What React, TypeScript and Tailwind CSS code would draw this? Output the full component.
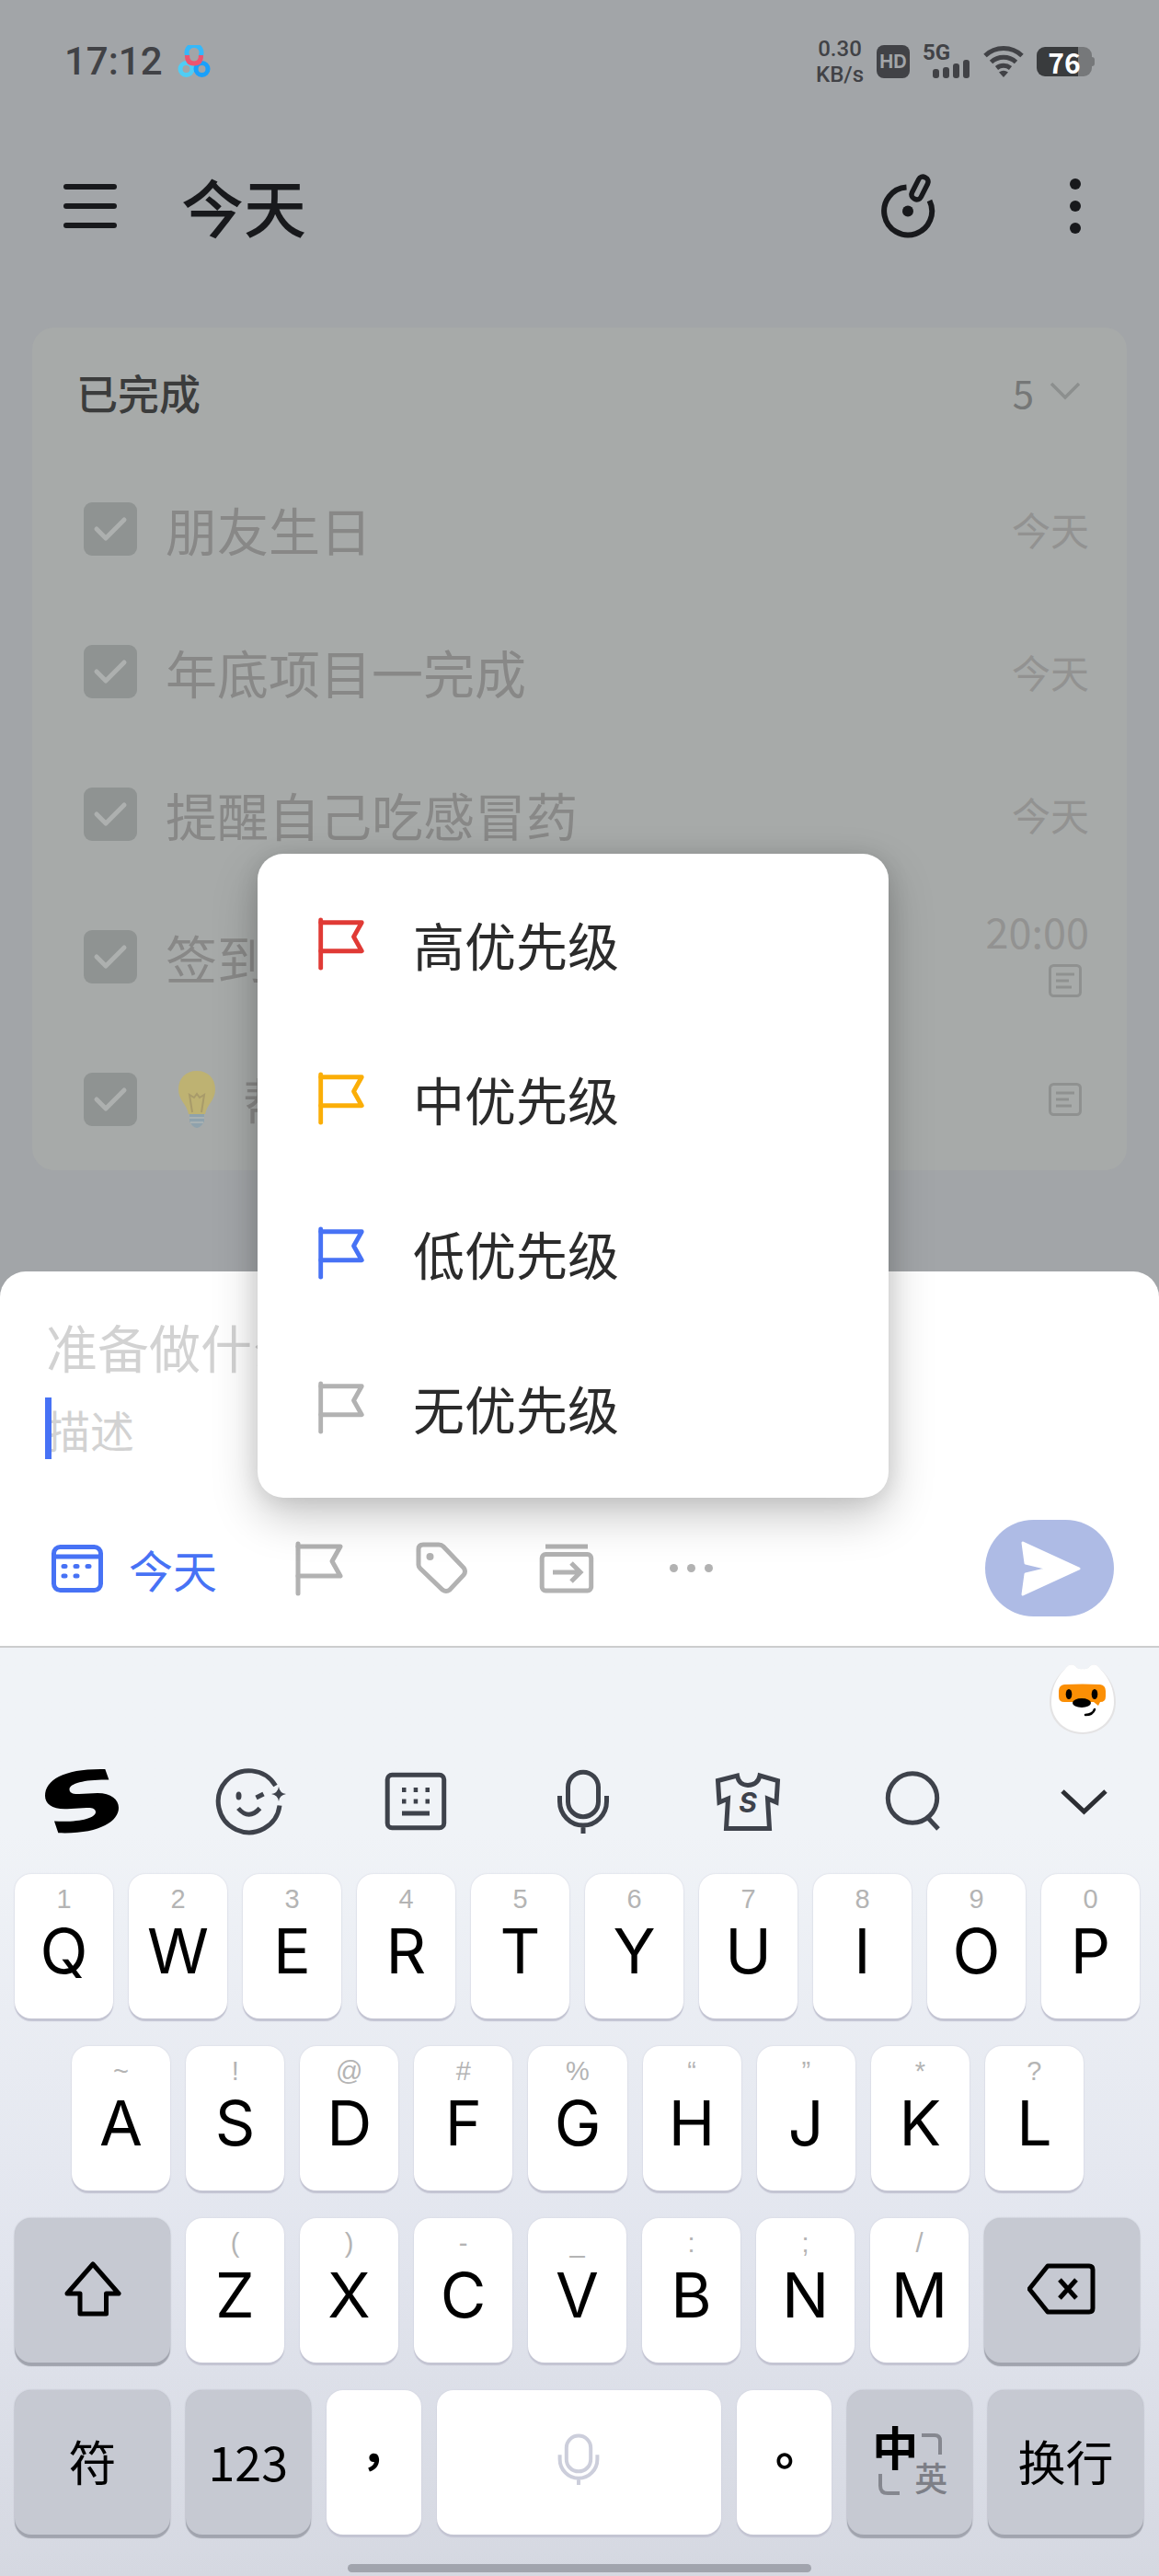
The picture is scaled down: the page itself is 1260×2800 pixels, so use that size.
import type { ReactNode } from "react";

const FlagIcon = ({ className }: { className: string }) => (
    <svg viewBox="0 0 64 64" className={className} fill="none" stroke="currentColor" strokeWidth="5" strokeLinecap="round" strokeLinejoin="round">
        <path d="M10 5V59" />
        <path d="M10 8H56L47 24L56 40H10" />
    </svg>
);

const MicIcon = ({ className, strokeWidth }: { className: string, strokeWidth: number }) => (
    <svg viewBox="0 0 80 80" className={className} fill="none" stroke="currentColor" strokeWidth={strokeWidth}>
        <rect x="23.5" y="8.2" width="33" height="48.5" rx="16.5" />
        <path d="M14.5 34V40A25.5 26 0 0 0 65.5 40V34M40 66V75" />
    </svg>
);

const NoteIcon = () => (
    <svg viewBox="0 0 52 36" className="w-[52px] h-9 text-[#8f9190]" fill="none" stroke="currentColor" strokeWidth="3">
        <rect x="9.5" y="1.5" width="33" height="33" rx="4" />
        <path d="M16 11H36M16 18H30M16 25H33" />
    </svg>
);

const StatusBar = () => (
    <div className="flex h-[134px] items-center justify-between pl-[70px] pr-[70px] text-[#414246]">
        <div className="flex items-center gap-4">
            <span className="font-['Roboto',sans-serif] text-[42px] leading-none font-medium">17:12</span>
            <svg viewBox="0 0 36 36" className="w-9 h-9" fill="none" strokeWidth="5">
                <path d="M11 12A8 8 0 1 1 25 12" stroke="#35b8fa" />
                <circle cx="9.500" cy="26" r="6.500" stroke="#4fcdf5" />
                <circle cx="26.500" cy="26" r="6.500" stroke="#1aa0fb" />
                <path d="M10.500 11Q10.500 20 18 20Q25.500 20 25.500 11" stroke="#ee5470" />
            </svg>
        </div>
        <div className="flex items-center gap-[14px]">
            <div className="flex flex-col items-center font-['Roboto',sans-serif] text-[24px] leading-7 font-medium">
                <span>0.30</span>
                <span>KB/s</span>
            </div>
            <span className="flex h-9 w-9 items-center justify-center rounded-lg bg-[#414246] font-['Inter',sans-serif] text-[20px] font-bold text-[#a2a5a8]">HD</span>
            <div className="flex flex-col">
                <span className="font-['Roboto',sans-serif] text-[24px] leading-[16px] font-bold">5G</span>
                <svg viewBox="0 0 52 20" className="w-[52px] h-5" fill="currentColor">
                    <rect x="11" y="10" width="7" height="10" rx="3" />
                    <rect x="22" y="8" width="7" height="12" rx="3" />
                    <rect x="33" y="4" width="7" height="16" rx="3" />
                    <rect x="44" y="0" width="7" height="20" rx="3" />
                </svg>
            </div>
            <svg viewBox="0 0 44 36" className="w-11 h-9" fill="none" stroke="currentColor" strokeWidth="5">
                <path d="M2 11.500A29 29 0 0 1 42 11.500" />
                <path d="M8.500 18.500A20 20 0 0 1 35.500 18.500" />
                <path d="M14.500 25A12 12 0 0 1 29.500 25" />
                <path d="M17 29.500Q22 26 27 29.500L22 35Z" fill="currentColor" stroke="none" />
            </svg>
            <div className="flex items-center">
                <span className="flex h-8 w-[60px] items-center justify-center rounded-[9px] bg-linear-to-r from-[#393b3d] from-75% to-[#76787a] to-75% text-[30px] leading-none font-bold text-white">76</span>
                <span className="h-[10px] w-[3px] rounded-r bg-[#76787a]" />
            </div>
        </div>
    </div>
);

const Header = () => (
    <header className="flex h-[180px] items-center justify-between pl-[69px] pr-[67px] text-[#18191c]">
        <div className="flex items-center gap-[70px]">
            <button aria-label="菜单" className="flex w-[58px] flex-col gap-[15px]">
                <span className="h-[6px] w-full rounded-full bg-current" />
                <span className="h-[6px] w-full rounded-full bg-current" />
                <span className="h-[6px] w-full rounded-full bg-current" />
            </button>
            <h1 className="text-[68px] leading-none font-medium">今天</h1>
        </div>
        <div className="flex items-center gap-[126px]">
            <button aria-label="专注">
                <svg viewBox="0 0 64 76" className="w-16 h-[76px]" fill="none" stroke="currentColor" strokeWidth="6">
                    <path d="M30.500 17.500A26 26 0 1 0 55.500 32" />
                    <circle cx="32" cy="43.500" r="6" fill="currentColor" stroke="none" />
                    <rect x="-5.500" y="-13" width="11" height="26" rx="5" strokeWidth="5.500" transform="translate(45 18.500) rotate(27)" />
                </svg>
            </button>
            <button aria-label="更多" className="flex w-12 flex-col items-center gap-[12px]">
                <span className="h-3 w-3 rounded-full bg-current" />
                <span className="h-3 w-3 rounded-full bg-current" />
                <span className="h-3 w-3 rounded-full bg-current" />
            </button>
        </div>
    </header>
);

const TaskRow = ({ id, title, bulb, children }: { id: string, title: string, bulb?: boolean, children: ReactNode }) => (
    <li className="flex h-[155px] items-center justify-between pl-14 pr-[41px]">
        <div className="flex items-center gap-[31px]">
            <span className="relative flex">
                <input id={id} type="checkbox" defaultChecked className="h-[58px] w-[58px] appearance-none rounded-[9px] bg-[#8f9392]" />
                <svg viewBox="0 0 58 58" className="pointer-events-none absolute inset-0" fill="none" stroke="#adb0af" strokeWidth="5" strokeLinecap="round" strokeLinejoin="round">
                    <path d="M14 29L24 39L44 19" />
                </svg>
            </span>
            <label htmlFor={id} className="flex items-center gap-7 text-[56px] leading-none whitespace-nowrap text-[#888887]">
                {bulb && (
                    <svg viewBox="0 0 56 64" className="w-14 h-16 opacity-70" fill="none">
                        <path d="M34 1C22 1 14 9 14 21C14 33 23 37 25 48H43C45 37 54 33 54 21C54 9 46 1 34 1Z" fill="#c9b65c" />
                        <path d="M29 46L26 27L31 30L34 26L37 30L42 27L39 46" stroke="#a99550" strokeWidth="2" />
                        <path d="M26 48H42V56Q38 63 34 63Q30 63 26 56Z" fill="#86a0ae" />
                        <path d="M26 52H42M27 57H41" stroke="#a8b5b8" strokeWidth="2" />
                    </svg>
                )}
                {title}
            </label>
        </div>
        <div className="flex flex-col items-end gap-5 text-[#929291]">{children}</div>
    </li>
);

const CompletedCard = () => (
    <section className="mx-[35px] mt-[42px] mb-[110px] rounded-[24px] bg-[#a7aaa9]">
        <div className="mb-px flex h-[140px] items-center justify-between pl-12 pr-[41px]">
            <h2 className="text-[45px] leading-none font-medium text-[#3b3c3c]">已完成</h2>
            <button className="flex items-center gap-2 text-[42px] leading-none text-[#757777]">
                5
                <svg viewBox="0 0 52 36" className="w-[52px] h-9" fill="none" stroke="#8c8f8e" strokeWidth="3.500">
                    <path d="M11 9L26 24L41 9" />
                </svg>
            </button>
        </div>
        <ul>
            <TaskRow id="task-1" title="朋友生日">
                <span className="text-[42px] leading-none">今天</span>
            </TaskRow>
            <TaskRow id="task-2" title="年底项目一完成">
                <span className="text-[42px] leading-none">今天</span>
            </TaskRow>
            <TaskRow id="task-3" title="提醒自己吃感冒药">
                <span className="text-[42px] leading-none">今天</span>
            </TaskRow>
            <TaskRow id="task-4" title="签到">
                <span className="text-[45px] leading-8">20:00</span>
                <NoteIcon />
            </TaskRow>
            <TaskRow id="task-5" title="帮" bulb>
                <NoteIcon />
            </TaskRow>
        </ul>
    </section>
);

const PriorityItem = ({ label, color }: { label: string, color: string }) => (
    <li>
        <button className="flex h-[168px] w-full items-center gap-12 pl-[59px] text-[56px] leading-none text-[#2b2b2b]">
            <span className={color}>
                <FlagIcon className="w-[62px] h-[62px]" />
            </span>
            {label}
        </button>
    </li>
);

const PriorityMenu = () => (
    <ul className="absolute bottom-[161px] left-[280px] w-[686px] rounded-[28px] bg-white py-[14px] shadow-[0_20px_50px_rgba(0,0,0,0.22),0_2px_24px_rgba(0,0,0,0.1)]">
        <PriorityItem label="高优先级" color="text-[#e03a35]" />
        <PriorityItem label="中优先级" color="text-[#fbae07]" />
        <PriorityItem label="低优先级" color="text-[#4772f5]" />
        <PriorityItem label="无优先级" color="text-[#b2b2b2]" />
    </ul>
);

const QuickAdd = () => (
    <section className="relative z-10 rounded-t-[28px] border-b-2 border-[#cccdce] bg-white pt-[41px] pb-8">
        <div className="flex px-[50px]">
            <input aria-label="任务标题" placeholder="准备做什么?" className="h-20 w-full text-[56px] outline-none placeholder:text-[#d2d2d2]" />
        </div>
        <div className="relative mt-4 flex px-[50px]">
            <input aria-label="描述" placeholder="描述" className="h-[68px] w-full text-[48px] outline-none placeholder:text-[#d2d2d2]" />
            <span className="absolute top-0 left-[49px] h-[67px] w-[7px] bg-[#4772f5]" />
        </div>
        <div className="mt-[65px] flex items-center justify-between pl-[52px] pr-[49px]">
            <div className="flex items-center gap-[78px]">
                <button className="flex items-center gap-6 text-[48px] leading-none text-[#4772f5]">
                    <svg viewBox="0 0 64 64" className="w-16 h-16" fill="none" stroke="currentColor" strokeWidth="5">
                        <rect x="6.500" y="8.500" width="51" height="47" rx="7" />
                        <path d="M6 19H58" />
                        <path d="M17 29.500H19M30 29.500H32M43 29.500H45M17 40H19M30 40H32" strokeLinecap="round" />
                    </svg>
                    今天
                </button>
                <div className="flex items-center gap-[71px] text-[#b2b2b2]">
                    <button aria-label="优先级">
                        <FlagIcon className="w-16 h-16" />
                    </button>
                    <button aria-label="标签">
                        <svg viewBox="0 0 64 64" className="w-16 h-16" fill="none" stroke="currentColor" strokeWidth="5">
                            <path d="M11 6H28Q31 6 33 8L55 31Q58 35 55 39L40 55Q36 58 32 55L8 32Q6 30 6 28V11Q6 6 11 6Z" />
                            <circle cx="18.500" cy="19" r="4" fill="currentColor" stroke="none" />
                        </svg>
                    </button>
                    <button aria-label="移动到">
                        <svg viewBox="0 0 64 64" className="w-16 h-16" fill="none" stroke="currentColor" strokeWidth="5">
                            <path d="M9 8H55" />
                            <rect x="5.200" y="16.500" width="53.500" height="39.500" rx="4" />
                            <path d="M17 36H46M37 26L47 36L37 46" />
                        </svg>
                    </button>
                    <button aria-label="更多选项" className="flex w-16 justify-center gap-[10px]">
                        <span className="h-[9px] w-[9px] rounded-full bg-current" />
                        <span className="h-[9px] w-[9px] rounded-full bg-current" />
                        <span className="h-[9px] w-[9px] rounded-full bg-current" />
                    </button>
                </div>
            </div>
            <button aria-label="发送" className="flex h-[105px] w-[140px] items-center justify-center rounded-full bg-[#aebbe5] pl-1">
                <svg viewBox="0 0 66 60" className="w-[66px] h-[60px]" fill="#fff" stroke="#fff" strokeWidth="3" strokeLinejoin="round">
                    <path d="M2 2L63 30L2 58L5 36L30 30L5 24Z" />
                </svg>
            </button>
        </div>
        <PriorityMenu />
    </section>
);

const KeyboardTools = () => (
    <div className="flex h-[146px] items-center justify-between pl-[49px] pr-[42px] text-[#3e424b]">
        <button aria-label="搜狗">
            <svg viewBox="0 0 80 80" className="w-20 h-20" fill="#000">
                <path d="M65.300 5L69.400 16.500C45 16 26.500 20 26.500 27C26.500 31 31 32.500 37 32L57 31C72 31 80 38 80 47C80 62 58 76 14.300 74.300L10 61.500C35 63 55 59 55 51.500C55 47.500 50 46.500 45 47L24 48.300C8 49 0 43 0 34C0 16 22 4 65.300 5Z" />
            </svg>
        </button>
        <button aria-label="表情">
            <svg viewBox="0 0 80 80" className="w-20 h-20" fill="none" stroke="currentColor" strokeWidth="5">
                <path d="M68.500 23A33.500 33.500 0 1 0 73 44.500" />
                <ellipse cx="28.500" cy="34" rx="3" ry="4.500" fill="currentColor" stroke="none" />
                <path d="M47.500 36L55.500 32M28 47.500Q39.500 61 51.500 47.500" />
                <path d="M72 24Q73 31 80 32Q73 33 72 40Q71 33 64 32Q71 31 72 24Z" fill="currentColor" stroke="none" />
            </svg>
        </button>
        <button aria-label="键盘">
            <svg viewBox="0 0 80 80" className="w-20 h-20" fill="none" stroke="currentColor" strokeWidth="5">
                <rect x="9.200" y="11.200" width="61.500" height="57.500" rx="5" />
                <path d="M25 27.500H29.500M37.700 27.500H42.200M50.500 27.500H55M25 40H29.500M37.700 40H42.200M50.500 40H55M25 53H55" />
            </svg>
        </button>
        <button aria-label="语音">
            <MicIcon className="w-20 h-20" strokeWidth={5} />
        </button>
        <button aria-label="皮肤">
            <svg viewBox="2 0 80 80" className="w-20 h-20" fill="none" stroke="currentColor" strokeWidth="5">
                <path d="M28.500 12Q30 22 40 22.500Q51 22 53 12L72.500 17.500L71 41L61.500 37L63.500 69.500H16.500L18.500 37L9 41L7.500 17.500Z" />
                <text x="40" y="52" textAnchor="middle" fill="currentColor" stroke="none" className="font-['Inter',sans-serif] text-[30px] font-bold italic">S</text>
            </svg>
        </button>
        <button aria-label="搜索">
            <svg viewBox="5 0 80 80" className="w-20 h-20" fill="none" stroke="currentColor" strokeWidth="5">
                <circle cx="40" cy="36.500" r="26.700" />
                <path d="M56 57L68 70" />
            </svg>
        </button>
        <button aria-label="收起">
            <svg viewBox="0 0 80 80" className="w-20 h-20" fill="none" stroke="#2c2e33" strokeWidth="5">
                <path d="M17 29L40.500 51L64 29" />
            </svg>
        </button>
    </div>
);

const LetterKey = ({ letter, hint }: { letter: string, hint: string }) => (
    <button className="flex h-[157px] flex-col items-center rounded-[18px] bg-white pt-[11px] text-black shadow-[0_3px_1px_#c3c4d2,0_0_2px_#cfd0dc]">
        <span className="font-['Liberation_Sans',sans-serif] text-[29px] leading-8 text-[#b4b4b4]">{hint}</span>
        <span className="font-['Inter',sans-serif] text-[68px] leading-[80px]">{letter}</span>
    </button>
);

const GrayKey = ({ label, children }: { label: string, children: ReactNode }) => (
    <button aria-label={label} className="flex h-[157px] items-center justify-center rounded-[18px] bg-[#c6c9d2] pb-1 text-[52px] leading-none text-black shadow-[0_4px_1px_#a1a4ae,0_0_2px_#a9acb6]">
        {children}
    </button>
);

const WhiteKey = ({ label, children }: { label: string, children: ReactNode }) => (
    <button aria-label={label} className="flex h-[157px] items-center justify-center rounded-[18px] bg-white pb-2 font-['Noto_Sans_CJK_TC',sans-serif] text-[52px] leading-none font-bold text-black shadow-[0_3px_1px_#c3c4d2,0_0_2px_#cfd0dc]">
        {children}
    </button>
);

const topKeys = [["Q", "1"], ["W", "2"], ["E", "3"], ["R", "4"], ["T", "5"], ["Y", "6"], ["U", "7"], ["I", "8"], ["O", "9"], ["P", "0"]];
const middleKeys = [["A", "~"], ["S", "!"], ["D", "@"], ["F", "#"], ["G", "%"], ["H", "“"], ["J", "”"], ["K", "*"], ["L", "?"]];
const bottomKeys = [["Z", "("], ["X", ")"], ["C", "-"], ["V", "_"], ["B", ":"], ["N", ";"], ["M", "/"]];

const Keyboard = () => (
    <section className="flex-1 bg-linear-to-b from-[#f0f3f7] from-20% via-[#e2e5ee] via-65% to-[#d5d8e1]">
        <div className="flex justify-end pt-[18px] pr-[45px]">
            <svg viewBox="0 0 76 76" className="h-[76px] w-[76px]">
                <path d="M38 5Q43 6 46 2Q52 -2 57 5Q74 20 74 41C74 62 58 76 38 76C18 76 2 62 2 41Q2 20 19 5Q24 -2 30 2Q33 6 38 5Z" fill="#e4e3e4" />
                <path d="M38 5Q43 6 46 2Q52 -2 57 5Q72 20 72 41C72 60 57 74 38 74C19 74 4 60 4 41Q4 20 19 5Q24 -2 30 2Q33 6 38 5Z" fill="#fff" />
                <path d="M18 22Q38 21 57 22Q63 23 63 29V35Q63 41 57 41L55 45L50 41H18Q12 41 12 35V29Q12 23 18 22Z" fill="#fb8f05" />
                <ellipse cx="23" cy="32.500" rx="3.300" ry="5.500" />
                <ellipse cx="51" cy="32.500" rx="3.300" ry="5.500" />
                <ellipse cx="37" cy="42" rx="10" ry="5" />
                <path d="M41 55Q49 55 51 49" fill="none" stroke="#000" strokeWidth="2.500" strokeLinecap="round" />
            </svg>
        </div>
        <KeyboardTools />
        <div className="flex flex-col gap-[30px] pt-[6px]">
            <div className="grid grid-cols-10 gap-[17px] pl-4 pr-[21px]">
                {topKeys.map(([letter, hint]) => <LetterKey key={letter} letter={letter} hint={hint} />)}
            </div>
            <div className="grid grid-cols-9 gap-[17px] pl-[78px] pr-[82px]">
                {middleKeys.map(([letter, hint]) => <LetterKey key={letter} letter={letter} hint={hint} />)}
            </div>
            <div className="grid grid-cols-[169fr_repeat(7,107fr)_169fr] gap-[17px] pl-4 pr-[21px]">
                <GrayKey label="上档">
                    <svg viewBox="0 0 64 60" className="w-16 h-[60px]" fill="none" stroke="currentColor" strokeWidth="5" strokeLinejoin="round">
                        <path d="M32 3L60 35H46.500V57H18V35H4Z" />
                    </svg>
                </GrayKey>
                {bottomKeys.map(([letter, hint]) => <LetterKey key={letter} letter={letter} hint={hint} />)}
                <GrayKey label="删除">
                    <svg viewBox="2 0 76 56" className="w-[76px] h-14" fill="none" stroke="currentColor" strokeWidth="5" strokeLinejoin="round">
                        <path d="M24 3H69Q73 3 73 7V49Q73 53 69 53H24L4 28Z" />
                        <path d="M37 18L55 38M55 18L37 38" />
                    </svg>
                </GrayKey>
            </div>
            <div className="grid grid-cols-[169fr_136fr_103fr_310fr_103fr_136fr_169fr] gap-[17px] pl-4 pr-[17px]">
                <GrayKey label="符">符</GrayKey>
                <GrayKey label="123">123</GrayKey>
                <WhiteKey label="逗号">，</WhiteKey>
                <WhiteKey label="空格">
                    <MicIcon className="w-16 h-16 text-[#cccedb]" strokeWidth={5} />
                </WhiteKey>
                <WhiteKey label="句号">。</WhiteKey>
                <GrayKey label="中英切换">
                    <span className="grid grid-cols-[50px_32px]">
                        <span className="text-[50px] leading-[34px] font-bold">中</span>
                        <svg viewBox="0 0 32 34" className="w-8 h-[34px]" fill="none" stroke="#85878f" strokeWidth="4">
                            <path d="M4 6H18Q24 6 24 12V27" />
                        </svg>
                        <svg viewBox="0 0 50 34" className="w-[50px] h-[34px] overflow-visible" fill="none" stroke="#85878f" strokeWidth="4">
                            <path d="M9 14V27Q9 35 17 35H30" />
                        </svg>
                        <span className="justify-self-end text-[36px] leading-[34px] font-medium text-[#7d7f87]">英</span>
                    </span>
                </GrayKey>
                <GrayKey label="换行">换行</GrayKey>
            </div>
        </div>
        <div className="mx-auto mt-8 h-[9px] w-[504px] max-w-full rounded-full bg-[#a1a4ad]" />
    </section>
);

const App = () => {
    return (
        <main className="flex min-h-screen flex-col overflow-hidden bg-[#a2a5a8] font-['Noto_Sans_CJK_SC',sans-serif]">
            <StatusBar />
            <Header />
            <CompletedCard />
            <QuickAdd />
            <Keyboard />
        </main>
    );
};

export default App;
